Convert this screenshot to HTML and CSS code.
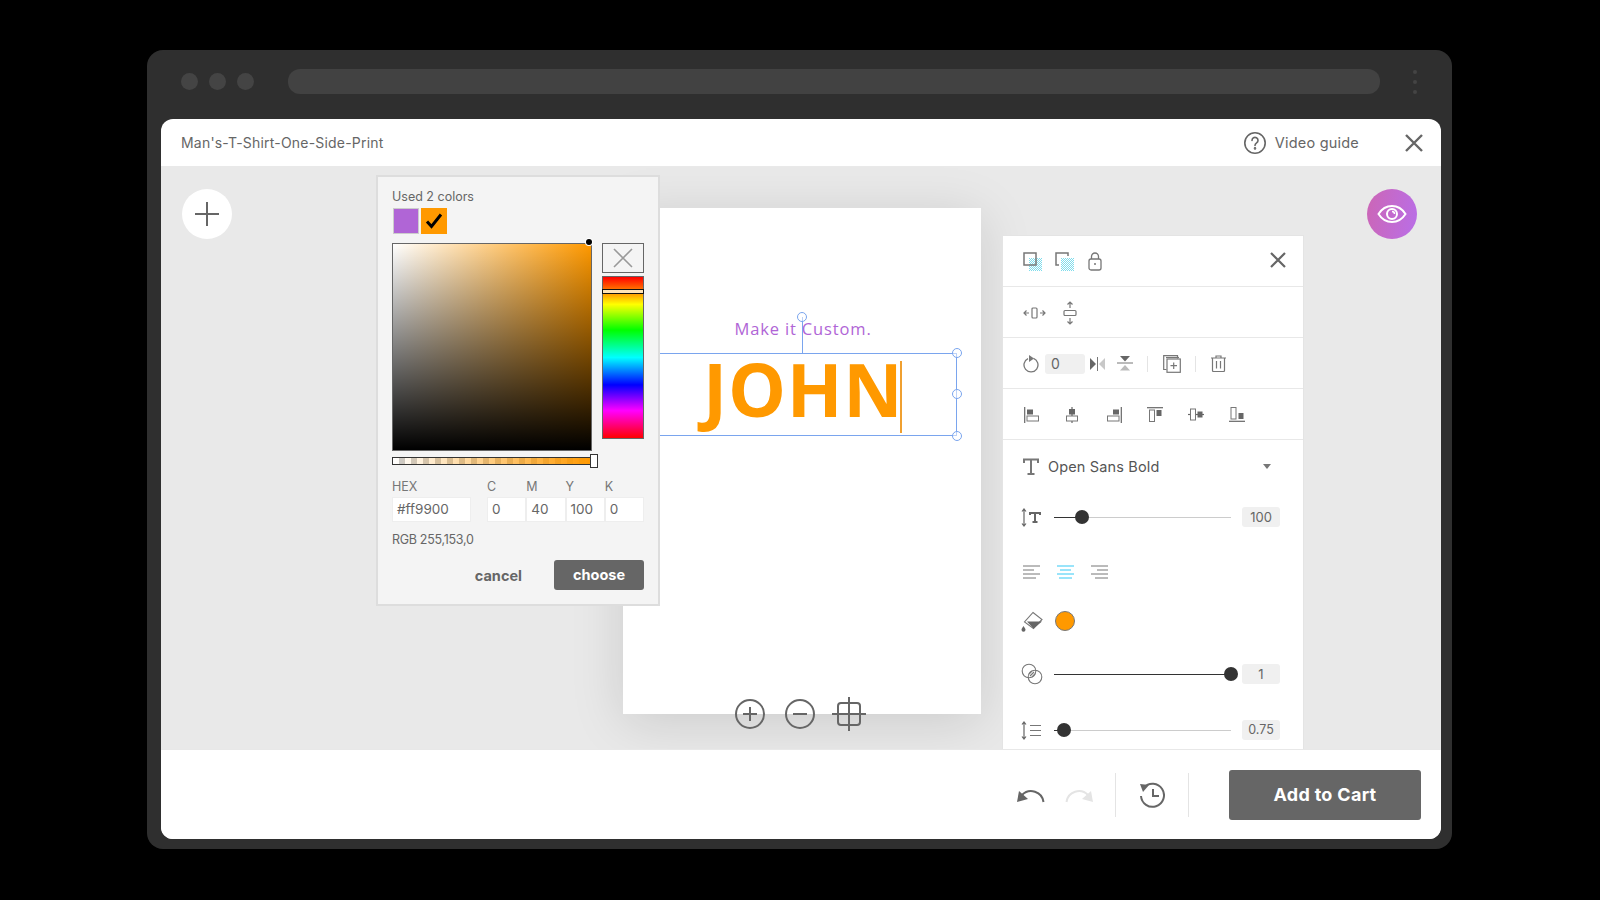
FILE: index.html

```html
<!DOCTYPE html>
<html lang="en">
<head>
  <meta charset="UTF-8">
  <title>Man's-T-Shirt-One-Side-Print</title>
  <link rel="stylesheet" href="styles.css">
</head>
<body>
  <div class="browser">
    <div class="browser-bar">
      <span class="dot"></span><span class="dot"></span><span class="dot"></span>
      <div class="url"></div>
      <div class="kebab"><i></i><i></i><i></i></div>
    </div>

    <div class="app">
      <header class="app-head">
        <div class="app-title">Man's-T-Shirt-One-Side-Print</div>
        <div class="guide">
          <svg width="24" height="24" viewBox="0 0 24 24" fill="none" stroke="#666" stroke-width="1.6"><circle cx="12" cy="12" r="10.2"/><path d="M9 9.4a3 3 0 1 1 4.6 2.5c-1 .7-1.6 1.2-1.6 2.5" stroke-linecap="round"/><circle cx="12" cy="17.4" r=".5" fill="#666"/></svg>
          <span>Video guide</span>
        </div>
        <svg class="close-main" width="18" height="18" viewBox="0 0 18 18" stroke="#666" stroke-width="2.4"><path d="M1 1l16 16M17 1L1 17"/></svg>
      </header>

      <main class="canvas">
        <div class="round-btn add">
          <svg width="26" height="26" viewBox="0 0 26 26" stroke="#666" stroke-width="2"><path d="M13 1v24M1 13h24"/></svg>
        </div>
        <div class="round-btn eye">
          <svg width="30" height="20" viewBox="0 0 30 20" fill="none" stroke="#fff" stroke-width="2"><path d="M1.5 10C5 4.5 9.5 2 15 2s10 2.5 13.5 8C25 15.5 20.5 18 15 18S5 15.5 1.5 10z"/><circle cx="15" cy="10" r="5"/><path d="M15 7.5a2.5 2.5 0 0 1 2.5 2.5" stroke-width="1.5"/></svg>
        </div>

        <div class="artboard">
          <div class="line-small">Make it Custom.</div>
          <div class="line-big">JOHN<span class="caret"></span></div>
          <div class="sel-box">
            <span class="stem"></span>
            <span class="knob k-top"></span>
            <span class="knob k-a"></span>
            <span class="knob k-b"></span>
            <span class="knob k-c"></span>
          </div>
        </div>

        <div class="zoom-tools">
          <svg width="30" height="30" viewBox="0 0 30 30" fill="none" stroke="#666" stroke-width="2"><circle cx="15" cy="15" r="14"/><path d="M15 8v14M8 15h14"/></svg>
          <svg width="30" height="30" viewBox="0 0 30 30" fill="none" stroke="#666" stroke-width="2"><circle cx="15" cy="15" r="14"/><path d="M8 15h14"/></svg>
          <svg width="34" height="34" viewBox="0 0 34 34" fill="none" stroke="#666" stroke-width="2"><rect x="6" y="6" width="22" height="22" rx="3"/><path d="M17 0v34M0 17h34"/></svg>
        </div>

        <section class="picker">
          <div class="used">Used 2 colors</div>
          <div class="swatches">
            <span class="swatch purple"></span>
            <span class="swatch orange">
              <svg width="18" height="16" viewBox="0 0 18 16" fill="none" stroke="#000" stroke-width="3"><path d="M2 8.5l4.5 5L16 1.5"/></svg>
            </span>
          </div>
          <div class="pick-main">
            <div class="field"><span class="field-knob"></span></div>
            <div class="pick-side">
              <div class="no-color">
                <svg width="20" height="20" viewBox="0 0 20 20" stroke="#999" stroke-width="1.6"><path d="M1 1l18 18M19 1L1 19"/></svg>
              </div>
              <div class="hue"><span class="hue-handle"></span></div>
            </div>
          </div>
          <div class="alpha"><span class="alpha-handle"></span></div>
          <div class="codes">
            <div class="hex-col">
              <label>HEX</label>
              <div class="code-input">#ff9900</div>
            </div>
            <div class="cmyk">
              <div><label>C</label><div class="code-input">0</div></div>
              <div><label>M</label><div class="code-input">40</div></div>
              <div><label>Y</label><div class="code-input">100</div></div>
              <div><label>K</label><div class="code-input">0</div></div>
            </div>
          </div>
          <div class="rgb">RGB 255,153,0</div>
          <div class="pick-actions">
            <span class="cancel">cancel</span>
            <span class="choose">choose</span>
          </div>
        </section>

        <aside class="panel">
          <div class="row">
            <span class="ic w32">
              <svg width="20" height="20" viewBox="0 0 20 20" fill="none"><defs><pattern id="chk" width="2" height="2" patternUnits="userSpaceOnUse"><rect width="1" height="1" fill="#7fdcec"/><rect x="1" y="1" width="1" height="1" fill="#7fdcec"/></pattern></defs><rect x="6" y="6" width="13" height="13" fill="url(#chk)"/><rect x="1" y="1" width="12" height="12" stroke="#777" stroke-width="1.5"/></svg>
            </span>
            <span class="ic w33">
              <svg width="20" height="20" viewBox="0 0 20 20" fill="none"><rect x="6" y="6" width="13" height="13" fill="url(#chk)"/><path d="M4 13H1V1h12v3" stroke="#777" stroke-width="1.5"/></svg>
            </span>
            <span class="ic">
              <svg width="14" height="19" viewBox="0 0 14 19" fill="none" stroke="#777" stroke-width="1.3"><rect x="1" y="7" width="12" height="11" rx="2"/><path d="M3.5 7V4.5a3.5 3.5 0 0 1 7 0V7M6 12h2"/></svg>
            </span>
            <svg class="panel-close" width="16" height="16" viewBox="0 0 16 16" stroke="#666" stroke-width="2.2"><path d="M1 1l14 14M15 1L1 15"/></svg>
          </div>

          <div class="row">
            <span class="ic w40">
              <svg width="23" height="12" viewBox="0 0 23 12" fill="none" stroke="#777" stroke-width="1.2"><rect x="9" y="1" width="5" height="10" rx="1"/><path d="M6 6H1m2.5-2.5L1 6l2.5 2.5M17 6h5m-2.5-2.5L22 6l-2.5 2.5"/></svg>
            </span>
            <span class="ic">
              <svg width="14" height="24" viewBox="0 0 14 24" fill="none" stroke="#777" stroke-width="1.2"><rect x="1" y="9.5" width="12" height="5" rx="1"/><path d="M7 7V1M4.5 3.5L7 1l2.5 2.5M7 17v6m-2.5-2.5L7 23l2.5-2.5"/></svg>
            </span>
          </div>

          <div class="row">
            <span class="ic w22">
              <svg width="16" height="18" viewBox="0 0 16 18" fill="none" stroke="#777" stroke-width="1.3"><path d="M5 3.6A7 7 0 1 0 10.5 3.4"/><path d="M6 0v7l5-3.500z" fill="#777" stroke="none"/></svg>
            </span>
            <span class="num-box rot">0</span>
            <span class="ic w27 ml5">
              <svg width="15" height="14" viewBox="0 0 15 14"><path d="M0 1l6 6-6 6z" fill="#666"/><path d="M7.5 0v14" stroke="#777" stroke-width="1"/><path d="M15 1L9 7l6 6z" fill="#c8c8c8"/></svg>
            </span>
            <span class="ic">
              <svg width="16" height="15" viewBox="0 0 16 15"><path d="M3 0h10L8 5.500z" fill="#666"/><path d="M0 7h16" stroke="#777" stroke-width="1"/><path d="M3 14.500h10L8 9z" fill="#bbb"/></svg>
            </span>
            <span class="sep s1"></span>
            <span class="ic">
              <svg width="18" height="18" viewBox="0 0 18 18" fill="none" stroke="#777" stroke-width="1.2"><path d="M3.5 14.500H.7V.7h13.800v2.800"/><path d="M3 2.500h13"/><rect x="4" y="4" width="13.300" height="13.300"/><path d="M10.700 7.500v6.500M7.500 10.700H14"/></svg>
            </span>
            <span class="sep s2"></span>
            <span class="ic">
              <svg width="15" height="17" viewBox="0 0 15 17" fill="none" stroke="#777" stroke-width="1.2"><path d="M0 3h15M5 3V1h5v2M1.500 3v12.500q0 1 1 1h10q1 0 1-1V3M5.500 6v7.500M9.500 6v7.500"/></svg>
            </span>
          </div>

          <div class="row align-row">
            <span class="ic a41"><svg width="16" height="16" viewBox="0 0 16 16" fill="none"><path d="M.7 0v16" stroke="#666" stroke-width="1.2"/><rect x="3" y="2.500" width="6" height="5" fill="#666"/><rect x="3" y="9" width="11.500" height="5" stroke="#777"/></svg></span>
            <span class="ic a41"><svg width="14" height="16" viewBox="0 0 14 16" fill="none"><path d="M7 0v16" stroke="#666" stroke-width="1.2"/><rect x="4" y="2" width="6" height="5.500" fill="#666"/><rect x="1.500" y="9" width="11" height="5" fill="#fff" stroke="#777"/></svg></span>
            <span class="ic a41"><svg width="16" height="16" viewBox="0 0 16 16" fill="none"><path d="M15.300 0v16" stroke="#666" stroke-width="1.2"/><rect x="7" y="2.500" width="6" height="5" fill="#666"/><rect x="1.500" y="9" width="11.500" height="5" stroke="#777"/></svg></span>
            <span class="ic a41"><svg width="16" height="15" viewBox="0 0 16 15" fill="none"><path d="M0 .7h16" stroke="#666" stroke-width="1.2"/><rect x="2.500" y="3" width="5" height="11.500" stroke="#777"/><rect x="9.500" y="3" width="5" height="6" fill="#666"/></svg></span>
            <span class="ic a41"><svg width="16" height="13" viewBox="0 0 16 13" fill="none"><path d="M0 6.500h16" stroke="#666" stroke-width="1.2"/><rect x="2.500" y="1" width="5" height="11" fill="#fff" stroke="#777"/><rect x="9.500" y="3.500" width="5" height="6" fill="#666"/></svg></span>
            <span class="ic a41"><svg width="16" height="15" viewBox="0 0 16 15" fill="none"><path d="M0 14.300h16" stroke="#666" stroke-width="1.2"/><rect x="2" y=".5" width="5" height="11.500" stroke="#777"/><rect x="9.500" y="6" width="5" height="6" fill="#666"/></svg></span>
          </div>

          <div class="row-plain font-row">
            <svg class="t-ic" width="16" height="17" viewBox="0 0 16 17" fill="none" stroke="#777" stroke-width="2"><path d="M1 5V1.500h14V5M8 1.500V16M4.500 16h7"/></svg>
            <span class="font-name">Open Sans Bold</span>
            <span class="tri"></span>
          </div>

          <div class="row-plain slider-row size-row">
            <span class="slider-ic">
              <svg width="21" height="19" viewBox="0 0 21 19" fill="none"><path d="M3 1v17M1 3.500L3 1l2 2.500M1 15.500L3 18l2-2.500" stroke="#666" stroke-width="1.2"/><path d="M9 7V5h10v2M14 5v9M11.500 14h5" stroke="#666" stroke-width="2"/></svg>
            </span>
            <div class="track"><span class="fill" style="width:16%"></span><span class="thumb" style="left:16%"></span></div>
            <span class="num-box val">100</span>
          </div>

          <div class="row-plain align-text">
            <svg width="18" height="14" viewBox="0 0 18 14" stroke="#777"><path d="M0 1h17M0 5h11M0 9h17M0 13h13" stroke-width="1"/></svg>
            <svg width="18" height="14" viewBox="0 0 18 14" stroke="#35c9f5"><path d="M0 1h17M3 5h11M0 9h17M2 13h13" stroke-width="1"/></svg>
            <svg width="18" height="14" viewBox="0 0 18 14" stroke="#777"><path d="M0 1h17M6 5h11M0 9h17M4 13h13" stroke-width="1"/></svg>
          </div>

          <div class="row-plain fill-row">
            <svg width="22" height="22" viewBox="0 0 22 22" fill="none"><path d="M12 1.500l9 7-8.500 9L3.500 11z" stroke="#777" stroke-width="1.1" fill="#fff"/><path d="M6 10.500h15l-8.500 7z" fill="#666"/><path d="M2.500 15c-1.200 1.800-2 2.800-2 3.800a2 2 0 0 0 4 0c0-1-.8-2-2-3.800z" fill="#666"/></svg>
            <span class="color-dot"></span>
          </div>

          <div class="row-plain slider-row opacity-row">
            <span class="slider-ic">
              <svg width="22" height="22" viewBox="0 0 22 22" fill="none" stroke="#777" stroke-width="1.1"><circle cx="8" cy="8" r="6.800"/><circle cx="14" cy="14" r="6.800"/><path d="M9 13l4-4M11 14l3-3M8 11l3-3"/></svg>
            </span>
            <div class="track on"><span class="thumb" style="left:100%"></span></div>
            <span class="num-box val">1</span>
          </div>

          <div class="row-plain slider-row line-row">
            <span class="slider-ic">
              <svg width="21" height="19" viewBox="0 0 21 19" fill="none" stroke="#777"><path d="M3 1v17M1 3.500L3 1l2 2.500M1 15.500L3 18l2-2.500" stroke="#666" stroke-width="1.2"/><path d="M9 4.500h11M9 9.500h11M9 14.500h11" stroke-width="1.2"/></svg>
            </span>
            <div class="track"><span class="fill" style="width:5.5%"></span><span class="thumb" style="left:5.5%"></span></div>
            <span class="num-box val small">0.75</span>
          </div>
        </aside>
      </main>

      <footer class="app-foot">
        <svg width="28" height="16" viewBox="0 0 28 16" fill="none"><path d="M26.500 15A12.500 12.500 0 0 0 5 8" stroke="#666" stroke-width="2"/><path d="M0 15l2-11 9 8z" fill="#666"/></svg>
        <svg class="redo" width="28" height="16" viewBox="0 0 28 16" fill="none"><path d="M1.500 15A12.500 12.500 0 0 1 23 8" stroke="#e4e4e4" stroke-width="2"/><path d="M28 15L26 4l-9 8z" fill="#e4e4e4"/></svg>
        <span class="foot-sep first"></span>
        <svg class="history" width="26" height="26" viewBox="0 0 26 26" fill="none" stroke="#666" stroke-width="2"><path d="M5 5.500A11.500 11.500 0 1 1 2 14"/><path d="M1 2l9 1-6 7z" fill="#666" stroke="none"/><path d="M14 7v7h6"/></svg>
        <span class="foot-sep"></span>
        <button class="cart">Add to Cart</button>
      </footer>
    </div>
  </div>
</body>
</html>
```

FILE: styles.css

```css
* { box-sizing: border-box; }
html, body { margin: 0; height: 100%; }
body {
  background: #000;
  padding: 50px 0 0 147px;
  font-family: Inter, "Liberation Sans", sans-serif;
  color: #666;
  overflow: hidden;
}
svg { display: block; flex: none; }

.browser {
  width: 1305px; height: 799px;
  background: #2f2f2f;
  border-radius: 16px;
  padding: 0 11px 10px 14px;
}
.browser-bar { height: 69px; display: flex; align-items: center; }
.dot { width: 17px; height: 17px; border-radius: 50%; background: #444; margin-right: 11px; margin-top: -6px; }
.dot:first-child { margin-left: 20px; }
.url { width: 1092px; height: 25px; border-radius: 12px; background: #424242; margin-left: 23px; margin-top: -6px; }
.kebab { margin-left: 33px; margin-top: -6px; display: flex; flex-direction: column; gap: 6px; }
.kebab i { width: 4px; height: 4px; border-radius: 50%; background: #444; display: block; }

.app {
  width: 1280px; height: 720px;
  background: #fff;
  border-radius: 12px;
  overflow: hidden;
  display: flex; flex-direction: column;
}
.app-head { height: 47px; display: flex; align-items: center; padding: 0 18px 0 20px; flex: none; }
.app-title { font-size: 14px; letter-spacing: .2px; }
.guide { margin-left: auto; display: flex; align-items: center; gap: 8px; font-size: 14.5px; letter-spacing: .2px; }
.close-main { margin-left: 46px; }

/* free canvas: everything in here floats on the work area */
.canvas { position: relative; height: 583px; background: #e9e9e9; overflow: hidden; flex: none; }
.round-btn {
  position: absolute; top: 23px;
  width: 50px; height: 50px; border-radius: 50%;
  display: flex; align-items: center; justify-content: center;
}
.add { left: 21px; background: #fff; }
.eye { left: 1206px; background: linear-gradient(100deg, #cc66b5, #b96ee8); }

.artboard {
  position: absolute; left: 462px; top: 42px;
  width: 358px; height: 506px;
  background: #fff;
  box-shadow: 0 8px 50px rgba(0,0,0,.13);
}
.line-small {
  position: absolute; left: 111.5px; top: 109px;
  font: 400 16.5px "Open Sans", sans-serif;
  letter-spacing: .85px;
  color: #b065d6;
  white-space: nowrap;
}
.line-big {
  position: absolute; left: 80px; top: 131px;
  font: 700 73px/100px "Open Sans", sans-serif;
  letter-spacing: .75px;
  color: #f90;
  white-space: nowrap;
}
.caret { position: absolute; left: 197px; top: 22px; width: 2px; height: 72px; background: #f0a030; }
.sel-box {
  position: absolute; left: 37px; top: 145px;
  width: 297px; height: 83px;
  border: solid #7aa5ee; border-width: 1px 1px 1px 0;
}
.stem { position: absolute; left: 142px; top: -37px; width: 1px; height: 37px; background: #7aa5ee; }
.knob { position: absolute; width: 10px; height: 10px; border: 1px solid #7aa5ee; border-radius: 50%; background: rgba(255,255,255,.5); }
.k-top { left: 137px; top: -42px; }
.k-a { right: -6px; top: -6px; }
.k-b { right: -6px; top: 35px; }
.k-c { right: -6px; bottom: -6px; }

.zoom-tools { position: absolute; left: 574px; top: 531px; display: flex; align-items: center; gap: 20px; }
.zoom-tools svg:last-child { margin-left: -3px; }

.picker {
  position: absolute; left: 215px; top: 9px;
  width: 284px; height: 431px;
  background: #f4f4f4;
  border: 2px solid #ddd;
  padding: 12px 14px 0;
  font-size: 12.5px;
}
.used { line-height: 16px; }
.swatches { display: flex; gap: 2px; margin: 3px 0 0 1px; }
.swatch { width: 26px; height: 26px; display: flex; align-items: center; justify-content: center; }
.purple { background: #b065d6; border: 1px solid #ccc; }
.orange { background: #f90; }
.pick-main { display: flex; gap: 10px; margin-top: 9px; }
.field {
  position: relative;
  width: 200px; height: 208px;
  border: 1px solid #666;
  background: linear-gradient(to top, #000, rgba(0,0,0,0)), linear-gradient(to right, #fff, #f90);
}
.field-knob {
  position: absolute; right: -1px; top: -5px;
  width: 6px; height: 6px; border-radius: 50%;
  background: #000; box-shadow: 0 0 0 1px #fff;
}
.pick-side { display: flex; flex-direction: column; gap: 3px; }
.no-color {
  width: 42px; height: 30px;
  border: 1px solid #666;
  display: flex; align-items: center; justify-content: center;
}
.hue {
  position: relative;
  width: 42px; height: 163px;
  border: 1px solid #666;
  background: linear-gradient(to bottom, #f00, #ff0 17%, #0f0 33%, #0ff 50%, #00f 67%, #f0f 83%, #f00);
}
.hue-handle { position: absolute; left: -1px; right: -1px; top: 12px; height: 5px; background: #ffe3b5; border: 1px solid #111; }
.alpha {
  position: relative;
  width: 200px; height: 8px;
  margin-top: 6px;
  border: 1px solid #333;
  background: linear-gradient(to right, rgba(255,153,0,0), #f90), repeating-conic-gradient(#ccc 0 25%, #fff 0 50%) 0 0 / 12px 12px;
}
.alpha-handle { position: absolute; left: 197px; top: -4px; width: 8px; height: 14px; background: #fff; border: 1px solid #333; }
.codes { display: flex; margin-top: 14px; }
.hex-col { width: 95px; }
.codes label { display: block; line-height: 16px; height: 16px; margin-bottom: 2px; color: #777; }
.cmyk { display: flex; width: 157px; }
.cmyk > div { flex: 1; }
.code-input {
  height: 25px; line-height: 23px;
  background: #fff; border: 1px solid #eee;
  padding-left: 4px; font-size: 13.5px; color: #666;
}
.hex-col .code-input { width: 79px; }
.rgb { margin-top: 10px; line-height: 16px; letter-spacing: -.3px; }
.pick-actions { display: flex; align-items: center; justify-content: flex-end; margin-top: 12px; }
.cancel { font-size: 14.5px; font-weight: 700; margin-right: 32px; }
.choose {
  width: 90px; height: 30px; line-height: 30px; text-align: center;
  background: #666; color: #fff; border-radius: 3px;
  font-size: 14.5px; font-weight: 700;
}

.panel {
  position: absolute; left: 842px; top: 70px;
  width: 300px; height: 530px;
  background: #fff;
  box-shadow: 0 0 0 1px #e4e4e4;
}
.row {
  height: 51px; padding: 1px 0 0 20px;
  display: flex; align-items: center;
  border-bottom: 1px solid #e8e8e8;
}
.ic { display: flex; align-items: center; justify-content: center; flex: none; }
.w32 { width: 32px; justify-content: flex-start; }
.w33 { width: 33px; justify-content: flex-start; }
.w40 { width: 40px; justify-content: flex-start; }
.w22 { width: 22px; justify-content: flex-start; }
.w27 { width: 27px; justify-content: flex-start; }
.ml5 { margin-left: 5px; }
.panel-close { margin: -3px 17px 0 auto; }
.num-box {
  display: block;
  background: #f0f0f0; border-radius: 3px;
  font-size: 13px; line-height: 20px; height: 20px;
}
.rot { width: 40px; padding-left: 6px; font-size: 14px; }
.sep { width: 1px; height: 16px; background: #e4e4e4; }
.s1 { margin: 0 15px 0 14px; }
.s2 { margin: 0 15px 0 14px; }
.align-row { padding-left: 21px; }
.a41 { width: 41px; justify-content: flex-start; }

.row-plain { display: flex; align-items: center; padding-left: 20px; }
.font-row { height: 53px; }
.font-name { margin-left: 9px; font-size: 14.5px; letter-spacing: .15px; color: #555; }
.tri { margin-left: auto; margin-right: 32px; border: 4px solid transparent; border-top: 5px solid #777; border-bottom: 0; }
.slider-row { padding: 0 23px 0 18px; }
.size-row { height: 48px; }
.opacity-row { height: 64px; }
.line-row { height: 48px; }
.slider-ic { width: 33px; flex: none; }
.track { position: relative; width: 177px; height: 1px; background: #ccc; }
.track.on { background: #333; }
.fill { position: absolute; left: 0; top: 0; height: 1px; background: #333; }
.thumb {
  position: absolute; top: -7px; margin-left: -7px;
  width: 14px; height: 14px; border-radius: 50%;
  background: #333;
}
.val { width: 38px; margin-left: 11px; text-align: center; }
.small { font-size: 12.5px; }
.align-text { height: 61px; gap: 16px; }
.fill-row { height: 40px; gap: 12px; padding-left: 18px; }
.color-dot { width: 20px; height: 20px; border-radius: 50%; background: #f90; border: 1px solid #777; margin-top: -2px; }

.app-foot {
  flex: 1;
  display: flex; align-items: center; justify-content: flex-end;
  padding-right: 20px;
  border-top: 1px solid #e8e8e8;
  background: #fff;
}
.redo { margin-left: 20px; }
.foot-sep { width: 1px; height: 44px; background: #e4e4e4; margin-left: 23px; }
.foot-sep.first { margin-left: 22px; }
.history { margin-left: 23px; }
.cart {
  margin-left: 40px;
  width: 192px; height: 50px;
  background: #666; color: #fff;
  border: 0; border-radius: 3px;
  font: 700 18px Inter, "Liberation Sans", sans-serif;
  letter-spacing: .3px;
}
```
